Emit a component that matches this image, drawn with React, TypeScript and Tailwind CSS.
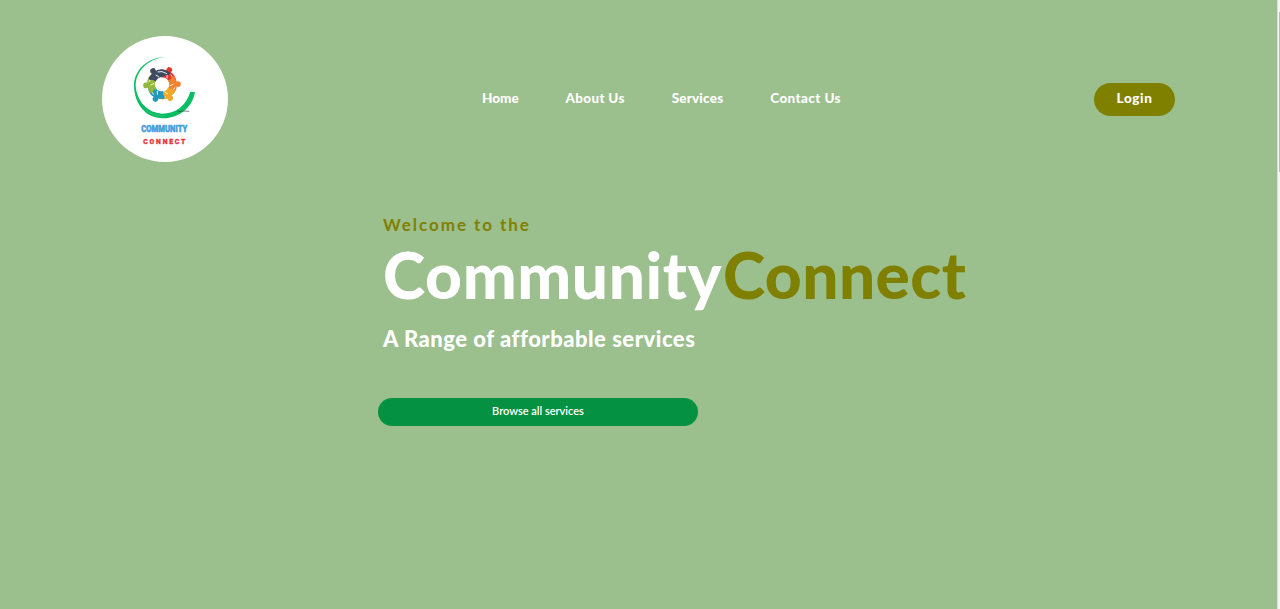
import React from "react";

const people = [
  { color: "#e3342d", angle: 27 },
  { color: "#f58233", angle: 89 },
  { color: "#eeaa28", angle: 149 },
  { color: "#2398bd", angle: 204 },
  { color: "#93b83c", angle: 266 },
  { color: "#3e4a5f", angle: 326 },
];

function Logo() {
  return (
    <svg viewBox="21 18 378 378" className="size-[126px]" role="img" aria-label="Community Connect">
      <circle cx="210" cy="207" r="189" fill="#fff" />
      <path
        d="M210 81C158 83 116 120 117 169C119 224 154 266 204 265C256 264 292 231 300 186L286 185C274 226 242 251 201 251C158 249 126 214 122 169C121 125 157 87 210 81Z"
        fill="#08bd62"
      />
      <path d="M150 240Q180 260 207 258" fill="none" stroke="#58cf91" strokeWidth="1.2" />
      <path d="M246 246Q265 241 283 244" fill="none" stroke="#315044" strokeWidth="2" />
      {people.map(({ color, angle }) => (
        <g key={color} transform={`translate(201 163) rotate(${angle})`}>
          <circle cx="0" cy="-48" r="8.5" fill={color} />
          <path d="M-23 -38Q-13 -43 0 -44Q17 -46 29 -34Q37 -26 40 -15L33 -12L25 -16L16 -17Q0 -26 -11 -17L-15 -26L-23 -31Z" fill={color} />
          <path d="M10 -38Q23 -35 30 -18M0 -34L5 -23" fill="none" stroke="#fff" strokeWidth="2.5" />
        </g>
      ))}
      <circle cx="201" cy="163" r="20" fill="#fff" />
      <g fontFamily="Roboto, sans-serif" fontWeight="900" strokeLinejoin="round">
        <text x="139" y="307" fontSize="26" textLength="138" lengthAdjust="spacingAndGlyphs" fill="#429edb" stroke="#429edb" strokeWidth="1.5">COMMUNITY</text>
        <text transform="translate(145 343) scale(.85 1)" fontSize="24" textLength="148" fill="#f03038" stroke="#f03038" strokeWidth="1">CONNECT</text>
      </g>
    </svg>
  );
}

export default function App() {
  return (
    <div className="flex h-[609px] w-full overflow-hidden bg-[#9bbf8d] font-['Lato',sans-serif] font-bold text-white">
      <main className="min-w-0 flex-1">
        <header className="flex h-[198px] items-center pl-[102px] pr-[102px]">
          <Logo />
          <nav className="ml-[254px] flex w-[359px] justify-between pb-0.5 text-[13.5px] leading-5 font-black">
            <a>Home</a>
            <a className="tracking-[0.3px]">About Us</a>
            <a className="tracking-[0.2px]">Services</a>
            <a className="tracking-[0.4px]">Contact Us</a>
          </nav>
          <button className="ml-auto h-[33px] w-[81px] rounded-full bg-[#808000] pb-0.5 text-[13.5px] font-black tracking-[0.6px]">Login</button>
        </header>
        <section className="flex flex-col items-start pl-[383px] pt-[15px]">
          <p className="text-[17px] leading-6 tracking-[1.95px] text-[#808000]">Welcome to the</p>
          <h1 className="flex text-[64px] leading-[76px] font-black whitespace-nowrap">
            <span className="w-[340px] tracking-[0.6px]">Community</span>
            <span className="tracking-[0.4px] text-[#808000]">Connect</span>
          </h1>
          <h2 className="mt-[11px] text-[22px] leading-[30px] font-black tracking-[0.5px]">A Range of afforbable services</h2>
          <button className="mt-[44px] -ml-[5px] h-[28px] w-[320px] rounded-full bg-[#059142] pb-px text-[11px] font-semibold">Browse all services</button>
        </section>
      </main>
      <aside className="flex w-[3px] justify-end border-l border-[#d9ddd6] bg-[#f5f5f5] pt-3">
        <div className="h-[160px] w-px bg-[#bcbcbc]" />
      </aside>
    </div>
  );
}
